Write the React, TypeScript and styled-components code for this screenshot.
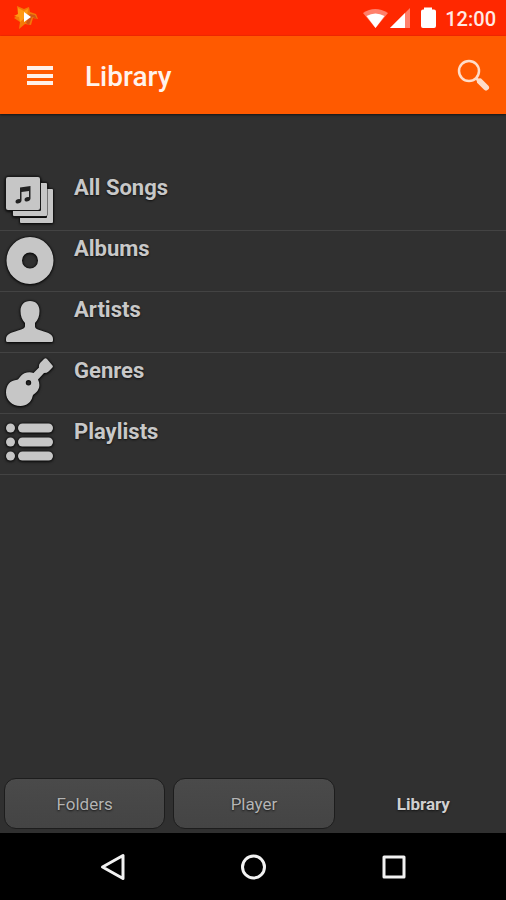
import React from "react";
import styled, { createGlobalStyle } from "styled-components";

const GlobalStyle = createGlobalStyle`
  * { box-sizing: border-box; }
  html, body { margin: 0; background: #303030; }
  body { font-family: Roboto, "Liberation Sans", sans-serif; }
  button { font-family: inherit; cursor: pointer; }
`;

const Screen = styled.div`
  min-height: 100vh;
  display: flex;
  flex-direction: column;
  background: #303030;
`;

const StatusBar = styled.div`
  height: 36px;
  padding: 0 10px 0 12px;
  display: flex;
  align-items: center;
  justify-content: space-between;
  background: #ff2800;
`;

const StatusIcons = styled.div`
  display: flex;
  align-items: center;
  svg { display: block; }
`;

const Clock = styled.time`
  margin-left: 6px;
  padding-top: 2px;
  color: #ffe9e4;
  font-size: 20px;
  font-weight: 500;
  line-height: 24px;
`;

const AppBar = styled.header`
  height: 78px;
  padding: 2px 12px 0 20px;
  display: flex;
  align-items: center;
  background: #ff5a00;
  box-shadow: 0 1px 2px #151515;
`;

const Title = styled.h1`
  flex: 1;
  margin: 0 0 0 25px;
  padding-top: 2px;
  color: #fff3ec;
  font-size: 28px;
  font-weight: 500;
  line-height: 36px;
`;

const IconButton = styled.button`
  display: grid;
  place-items: center;
  width: 40px;
  height: 40px;
  padding: 0;
  border: 0;
  background: none;
`;

const Library = styled.main`
  flex: 1;
  padding-top: 56px;
`;

const List = styled.ul`
  margin: 0;
  padding: 0;
  list-style: none;
`;

const Row = styled.button`
  display: flex;
  align-items: flex-start;
  gap: 20px;
  width: 100%;
  height: 61px;
  padding: 4px 6px;
  border: 0;
  border-bottom: 1px solid #434343;
  background: none;
  color: #c8c8c8;
  text-align: left;
`;

const RowIcon = styled.svg`
  width: 48px;
  height: 48px;
  margin-top: 2px;
  flex: none;
  overflow: visible;
  fill: #c6c6c6;
  filter: drop-shadow(0 0 1px #000) drop-shadow(0 1px 1px #111);
`;

const RowLabel = styled.span`
  font-size: 22px;
  font-weight: 700;
  line-height: 28px;
  text-shadow: 0 1px 2px #111;
`;

const Tabs = styled.nav`
  display: grid;
  grid-template-columns: repeat(3, 1fr);
  gap: 8px;
  padding: 4px 2px 4px 4px;
`;

const Tab = styled.button<{ $active?: boolean }>`
  height: 51px;
  padding: 0;
  border: 1px solid ${(p) => (p.$active ? "transparent" : "#1d1d1d")};
  border-radius: 12px;
  background: ${(p) => (p.$active ? "none" : "linear-gradient(#4a4a4a, #444)")};
  color: ${(p) => (p.$active ? "#d0d0d0" : "#b4b4b4")};
  font-size: 17px;
  font-weight: ${(p) => (p.$active ? 700 : 400)};
  line-height: 24px;
  text-shadow: 0 1px 2px #151515;
`;

const SystemNav = styled.nav`
  height: 67px;
  display: flex;
  align-items: center;
  justify-content: center;
  gap: 100px;
  background: #000;
`;

const items = [
  {
    label: "All Songs",
    icon: (
      <>
        <path d="M41 13h5q1 0 1 1v32q0 1-1 1H15q-1 0-1-1v-4h26q1 0 1-1z" />
        <path d="M35 7h5q1 0 1 1v31q0 1-1 1H8q-1 0-1-1v-4h27q1 0 1-1z" stroke="#222" strokeWidth="1" paintOrder="stroke" />
        <rect x="0" y="1" width="34" height="33" rx="2" stroke="#222" strokeWidth="1" paintOrder="stroke" />
        <path fillRule="evenodd" d="M14 11.500 24.500 10v12.500c0 3-6 4.200-6 1.200 0-2 2.500-3 4.500-2.500V15l-7.500 1v8.500c0 3-6 4.200-6 1.200 0-2 2.500-3 4.500-2.500z" fill="#222" />
      </>
    ),
  },
  {
    label: "Albums",
    icon: <path fillRule="evenodd" d="M24 0a23.500 23.500 0 1 0 0 47 23.500 23.500 0 0 0 0-47zm0 15.500a8 8 0 1 1 0 16 8 8 0 0 1 0-16z" />,
  },
  {
    label: "Artists",
    icon: <path d="M24 3c-6 0-9.500 4-9.500 10 0 5 1.500 9 4.500 12v3c0 2-2 3-7 4.500C4 35 0 36.500 0 41v1.500Q0 44 1.500 44h44q1.500 0 1.500-1.500V41c0-4.500-4-6-12-8.500-5-1.500-6-2.500-6-4.500v-3c3-3 4.500-7 4.500-12 0-6-3.500-10-9.500-10z" />,
  },
  {
    label: "Genres",
    icon: (
      <path
        fillRule="evenodd"
        d="M38 0q1.500-1.500 3 0l5.500 6.500q1 1.500-.5 2.500l-3.500 3.500q-1.500 1.500-4.500 1.500l-6 6.500c2.500 5 1.500 10-2 13-1.500 1.500-3 1.500-3.500 4-1 5.500-6 9.500-12 9.500C6 47 0 41 0 33.500c0-7 4-12 10-12.500 2 0 2.500-1 4-3 3.500-4.500 9-5.500 13.500-4l5.500-5.500q-.5-3 1.500-5zM22.500 21a2.700 2.700 0 1 0 0 5.400 2.700 2.700 0 0 0 0-5.400z"
      />
    ),
  },
  {
    label: "Playlists",
    icon: (
      <>
        {[8, 22, 36].map((y) => (
          <g key={y}>
            <circle cx="4.500" cy={y} r="4.500" />
            <rect x="12" y={y - 4.5} width="35" height="9" rx="4.500" />
          </g>
        ))}
      </>
    ),
  },
];

export default function App() {
  return (
    <Screen>
      <GlobalStyle />
      <StatusBar>
        <svg width="27" height="24" viewBox="0 0 27 24" aria-hidden="true">
          <path d="m5 0 7 3 5-2 1 5 6 2 2 5-5-1-2 7-6-1-6 5 1-7-6-4 4-3z" fill="#f47a08" />
          <path d="m6 2 6 3 4-2-1 7-7 6-1-5-5-1 4-2z" fill="#ff9a12" />
          <path d="m18 8 5 1 2 4-5-2-3 8-3-2z" fill="#cf5418" />
          <path d="m12 6 7 5-7 5z" fill="#fff" />
        </svg>
        <StatusIcons>
          <svg width="76" height="24" viewBox="0 0 76 24" aria-hidden="true">
            <path d="M0 7q12-8 25 0L12.500 22z" fill="#ff806b" />
            <path d="M3.500 10q9-5 18 0l-9 12z" fill="#fff" />
            <path d="M47 2v20H27z" fill="#ff806b" />
            <path d="M42 7v15H27z" fill="#fff" />
            <path d="M61 1.500h8v2h2q2 0 2 2V20q0 2-2 2H60q-2 0-2-2V5.500q0-2 2-2h1z" fill="#fff" />
          </svg>
          <Clock>12:00</Clock>
        </StatusIcons>
      </StatusBar>
      <AppBar>
        <IconButton aria-label="Menu">
          <svg width="28" height="20" viewBox="0 0 28 20" fill="#fff0e8">
            <path d="M1 0h26v4H1zM1 8h26v4H1zM1 15h26v4H1z" />
          </svg>
        </IconButton>
        <Title>Library</Title>
        <IconButton aria-label="Search">
          <svg width="34" height="34" viewBox="0 0 34 34" fill="none" stroke="#ffdcc8">
            <circle cx="12" cy="12" r="10" strokeWidth="2.500" />
            <path d="m19 19 4 4" strokeWidth="3" />
            <path d="m23 22.500 6 6" strokeWidth="6" strokeLinecap="round" />
          </svg>
        </IconButton>
      </AppBar>
      <Library>
        <List>
          {items.map((item) => (
            <li key={item.label}>
              <Row>
                <RowIcon viewBox="0 0 48 48" aria-hidden="true">{item.icon}</RowIcon>
                <RowLabel>{item.label}</RowLabel>
              </Row>
            </li>
          ))}
        </List>
      </Library>
      <Tabs aria-label="Sections">
        <Tab>Folders</Tab>
        <Tab>Player</Tab>
        <Tab $active aria-current="page">Library</Tab>
      </Tabs>
      <SystemNav aria-label="System">
        <IconButton aria-label="Back">
          <svg width="30" height="30" viewBox="0 0 30 30" fill="none" stroke="#f2f2f2" strokeWidth="3" strokeLinejoin="round">
            <path d="M25 3.500v23L4.500 15z" />
          </svg>
        </IconButton>
        <IconButton aria-label="Home">
          <svg width="30" height="30" viewBox="0 0 30 30" fill="none" stroke="#f2f2f2" strokeWidth="3">
            <circle cx="15.500" cy="15" r="11" />
          </svg>
        </IconButton>
        <IconButton aria-label="Recent apps">
          <svg width="30" height="30" viewBox="0 0 30 30" fill="none" stroke="#f2f2f2" strokeWidth="3" strokeLinejoin="round">
            <path d="M6 5h20v20H6z" />
          </svg>
        </IconButton>
      </SystemNav>
    </Screen>
  );
}
